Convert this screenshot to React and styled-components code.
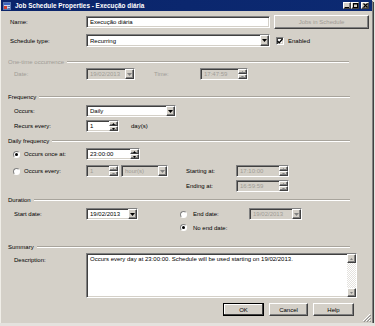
import React from "react";
import styled, { createGlobalStyle, css } from "styled-components";

const Global = createGlobalStyle`
  html, body { margin: 0; padding: 0; background: #e4e2de; }
  body { font-family: "Liberation Sans", Arial, sans-serif; font-size: 6px; color: #000; }
  * { box-sizing: border-box; }
`;

const Win = styled.div`
  width: 372px;
  height: 323px;
  background: #d4d0c8;
  box-shadow: 1px 1px 0 #808080, 2px 2px 0 #404040;
  border-left: 1px solid #f0eee8;
  display: flex;
  flex-direction: column;
  position: relative;
  overflow: hidden;
`;

const TitleBar = styled.div`
  height: 11px;
  background: linear-gradient(90deg, #0a246a 0%, #0c2a72 100%);
  display: flex;
  align-items: center;
  padding: 0 3px 0 2px;
`;

const TitleText = styled.span`
  color: #fff;
  font-weight: bold;
  font-size: 6.4px;
  margin-left: 4px;
  flex: 1;
  white-space: nowrap;
`;

const raised = css`
  background: #d4d0c8;
  border: 1px solid;
  border-color: #fff #404040 #404040 #fff;
  box-shadow: inset -1px -1px 0 #808080;
`;

const sunken = css`
  border: 1px solid;
  border-color: #808080 #fff #fff #808080;
  box-shadow: inset 1px 1px 0 #404040, inset -1px -1px 0 #d4d0c8;
`;

const CapButton = styled.div`
  ${raised};
  width: 8px;
  height: 7px;
  margin-left: ${(p) => p.$ml || 0}px;
  display: flex;
  align-items: center;
  justify-content: center;
  font-size: 6px;
  line-height: 1;
`;

const Row = styled.div`
  display: flex;
  align-items: ${(p) => p.$align || "center"};
  height: ${(p) => p.$h}px;
  margin-top: ${(p) => p.$mt}px;
  padding-left: ${(p) => p.$pl}px;
  flex-shrink: 0;
`;

const Label = styled.span`
  width: ${(p) => (p.$w ? `${p.$w}px` : "auto")};
  margin-left: ${(p) => p.$ml || 0}px;
  margin-top: ${(p) => p.$mt || 0}px;
  color: ${(p) => (p.$dis ? "#a09c96" : "#000")};
  white-space: nowrap;
  flex-shrink: 0;
`;

const Box = styled.div`
  ${sunken};
  width: ${(p) => p.$w}px;
  height: ${(p) => p.$h || 12}px;
  margin-left: ${(p) => p.$ml || 0}px;
  background: ${(p) => (p.$dis ? "#d4d0c8" : "#fff")};
  color: ${(p) => (p.$dis ? "#a09c96" : "#000")};
  display: flex;
  align-items: center;
  padding-left: 3px;
  flex-shrink: 0;
  white-space: nowrap;
`;

const BoxText = styled.span`
  flex: 1;
  overflow: hidden;
`;

const DropBtn = styled.div`
  ${raised};
  width: 9px;
  height: 100%;
  display: flex;
  align-items: center;
  justify-content: center;
  border-width: 1px;
`;

const SpinCol = styled.div`
  width: 9px;
  height: 100%;
  display: flex;
  flex-direction: column;
`;

const SpinPart = styled.div`
  ${raised};
  flex: 1;
  display: flex;
  align-items: center;
  justify-content: center;
`;

const Arrow = ({ up, dis, size = 3 }) => (
  <svg width={size * 2 - 1} height={size} viewBox={`0 0 ${size * 2 - 1} ${size}`}>
    <polygon
      points={up ? `0,${size} ${size - 0.5},0 ${size * 2 - 1},${size}` : `0,0 ${size * 2 - 1},0 ${size - 0.5},${size}`}
      fill={dis ? "#808080" : "#000"}
    />
  </svg>
);

const Combo = ({ w, h, ml, dis, children }) => (
  <Box $w={w} $h={h} $ml={ml} $dis={dis}>
    <BoxText>{children}</BoxText>
    <DropBtn>
      <Arrow dis={dis} />
    </DropBtn>
  </Box>
);

const Spin = ({ w, ml, dis, children }) => (
  <Box $w={w} $ml={ml} $dis={dis}>
    <BoxText>{children}</BoxText>
    <SpinCol>
      <SpinPart>
        <Arrow up dis={dis} size={2} />
      </SpinPart>
      <SpinPart>
        <Arrow dis={dis} size={2} />
      </SpinPart>
    </SpinCol>
  </Box>
);

const RadioCircle = styled.div`
  width: 7px;
  height: 7px;
  border-radius: 50%;
  border: 1px solid;
  border-color: #808080 #fff #fff #808080;
  background: #fff;
  margin-left: ${(p) => p.$ml || 0}px;
  display: flex;
  align-items: center;
  justify-content: center;
  flex-shrink: 0;
  &::after {
    content: "";
    width: 3px;
    height: 3px;
    border-radius: 50%;
    background: ${(p) => (p.$on ? "#000" : "transparent")};
  }
`;

const Check = styled.div`
  ${sunken};
  width: 8px;
  height: 8px;
  margin-left: ${(p) => p.$ml || 0}px;
  background: #fff;
  display: flex;
  align-items: center;
  justify-content: center;
  flex-shrink: 0;
`;

const Header = styled.div`
  display: flex;
  align-items: center;
  height: 9px;
  margin-top: ${(p) => p.$mt}px;
  padding-left: 7px;
  margin-right: ${(p) => p.$mr || 22}px;
  flex-shrink: 0;
`;

const HeaderText = styled.span`
  color: ${(p) => (p.$dis ? "#a09c96" : "#000")};
  white-space: nowrap;
  margin-right: 3px;
`;

const HeaderLine = styled.div`
  flex: 1;
  border-top: 1px solid #a8a49c;
  border-bottom: 1px solid #fff;
`;

const PushButton = styled.div`
  ${raised};
  width: ${(p) => p.$w}px;
  height: ${(p) => p.$h || 13}px;
  margin-left: ${(p) => p.$ml || 0}px;
  display: flex;
  align-items: center;
  justify-content: center;
  color: ${(p) => (p.$dis ? "#a09c96" : "#000")};
  flex-shrink: 0;
  ${(p) =>
    p.$default &&
    css`
      outline: 1px solid #000;
      outline-offset: -1px;
      box-shadow: inset -1px -1px 0 #404040, inset 1px 1px 0 #fff;
    `}
`;

const DescBox = styled.div`
  ${sunken};
  width: 271px;
  height: 45px;
  background: #fff;
  display: flex;
  flex-shrink: 0;
`;

const DescText = styled.div`
  flex: 1;
  padding: 2px 3px;
  white-space: nowrap;
  overflow: hidden;
  line-height: 1.2;
`;

const ScrollBar = styled.div`
  width: 9px;
  height: 100%;
  display: flex;
  flex-direction: column;
  background: repeating-conic-gradient(#fff 0 25%, #e4e2de 0 50%) 0 0 / 2px 2px;
`;

const ScrollBtn = styled.div`
  ${raised};
  height: 9px;
  display: flex;
  align-items: center;
  justify-content: center;
`;

const ScrollTrack = styled.div`
  flex: 1;
`;

const Grip = styled.svg`
  position: absolute;
  right: 1px;
  bottom: 1px;
`;

export default function App() {
  return (
    <>
      <Global />
      <Win>
        <TitleBar>
          <svg width="8" height="8" viewBox="0 0 8 8">
            <rect x="0" y="0" width="8" height="8" fill="#c8d8f0" />
            <rect x="0.5" y="0.5" width="7" height="7" fill="none" stroke="#5a78b0" />
            <rect x="1" y="1" width="6" height="2" fill="#3a64c0" />
            <rect x="1" y="4" width="3" height="3" fill="#d04030" />
            <rect x="4.5" y="4" width="2.5" height="1" fill="#5a78b0" />
            <rect x="4.5" y="6" width="2.5" height="1" fill="#5a78b0" />
          </svg>
          <TitleText>Job Schedule Properties - Execução diária</TitleText>
          <CapButton>
            <svg width="4" height="4" viewBox="0 0 4 4"><rect x="0" y="3" width="4" height="1" fill="#000" /></svg>
          </CapButton>
          <CapButton>
            <svg width="5" height="5" viewBox="0 0 5 5"><rect x="0.5" y="0.5" width="4" height="4" fill="none" stroke="#000" /><rect x="0" y="0" width="5" height="1.5" fill="#000" /></svg>
          </CapButton>
          <CapButton $ml={2}>
            <svg width="5" height="5" viewBox="0 0 5 5"><path d="M0.5 0.5 L4.5 4.5 M4.5 0.5 L0.5 4.5" stroke="#000" strokeWidth="1.2" /></svg>
          </CapButton>
        </TitleBar>

        <Row $mt={4} $h={14} $pl={9}>
          <Label $w={76}>Name:</Label>
          <Box $w={184}>
            <BoxText>Execução diária</BoxText>
          </Box>
          <PushButton $w={95} $h={14} $ml={4} $dis>Jobs in Schedule</PushButton>
        </Row>

        <Row $mt={5} $h={13} $pl={9}>
          <Label $w={76}>Schedule type:</Label>
          <Combo w={184} h={13}>Recurring</Combo>
          <Check $ml={6}>
            <svg width="6" height="6" viewBox="0 0 6 6"><path d="M0.5 3 L2.2 4.8 L5.5 1" fill="none" stroke="#000" strokeWidth="1.3" /></svg>
          </Check>
          <Label $ml={4}>Enabled</Label>
        </Row>

        <Header $mt={10} $mr={23}>
          <HeaderText $dis>One-time occurrence</HeaderText>
          <HeaderLine />
        </Header>
        <Row $mt={2} $h={12} $pl={13}>
          <Label $w={72} $dis>Date:</Label>
          <Combo w={49} dis>19/02/2013</Combo>
          <Label $w={46} $ml={19} $dis>Time:</Label>
          <Spin w={48} dis>17:47:59</Spin>
        </Row>

        <Header $mt={12}>
          <HeaderText>Frequency</HeaderText>
          <HeaderLine />
        </Header>
        <Row $mt={4} $h={12} $pl={13}>
          <Label $w={72}>Occurs:</Label>
          <Combo w={90}>Daily</Combo>
        </Row>
        <Row $mt={3} $h={12} $pl={13}>
          <Label $w={72}>Recurs every:</Label>
          <Spin w={33}>1</Spin>
          <Label $ml={12}>day(s)</Label>
        </Row>

        <Header $mt={4}>
          <HeaderText>Daily frequency</HeaderText>
          <HeaderLine />
        </Header>
        <Row $mt={3} $h={12} $pl={12}>
          <RadioCircle $on />
          <Label $w={62} $ml={4}>Occurs once at:</Label>
          <Spin w={54}>23:00:00</Spin>
        </Row>
        <Row $mt={5} $h={12} $pl={12}>
          <RadioCircle />
          <Label $w={62} $ml={4}>Occurs every:</Label>
          <Spin w={33} dis>1</Spin>
          <Combo w={47} ml={2} dis>hour(s)</Combo>
          <Label $w={50} $ml={18}>Starting at:</Label>
          <Spin w={53} dis>17:10:00</Spin>
        </Row>
        <Row $mt={3} $h={12} $pl={185}>
          <Label $w={50}>Ending at:</Label>
          <Spin w={53} dis>16:59:59</Spin>
        </Row>

        <Header $mt={3}>
          <HeaderText>Duration</HeaderText>
          <HeaderLine />
        </Header>
        <Row $mt={4} $h={12} $pl={13}>
          <Label $w={72}>Start date:</Label>
          <Combo w={52}>19/02/2013</Combo>
          <RadioCircle $ml={42} />
          <Label $w={56} $ml={6}>End date:</Label>
          <Combo w={53} dis>19/02/2013</Combo>
        </Row>
        <Row $mt={2} $h={11} $pl={179}>
          <RadioCircle $on />
          <Label $ml={6}>No end date:</Label>
        </Row>

        <Header $mt={9}>
          <HeaderText>Summary</HeaderText>
          <HeaderLine />
        </Header>
        <Row $mt={2} $h={45} $pl={13} $align="flex-start">
          <Label $w={72} $mt={4}>Description:</Label>
          <DescBox>
            <DescText>Occurs every day at 23:00:00. Schedule will be used starting on 19/02/2013.</DescText>
            <ScrollBar>
              <ScrollBtn><Arrow up dis size={2} /></ScrollBtn>
              <ScrollTrack />
              <ScrollBtn><Arrow dis size={2} /></ScrollBtn>
            </ScrollBar>
          </DescBox>
        </Row>

        <Row $mt={5} $h={13} $pl={222}>
          <PushButton $w={41} $default>OK</PushButton>
          <PushButton $w={39} $ml={5}>Cancel</PushButton>
          <PushButton $w={41} $ml={5}>Help</PushButton>
        </Row>

        <Grip width="9" height="9" viewBox="0 0 9 9">
          <path d="M8 1 L1 8 M8 4 L4 8 M8 7 L7 8" stroke="#fff" strokeWidth="1" />
          <path d="M9 1.8 L1.8 9 M9 4.8 L4.8 9 M9 7.8 L7.8 9" stroke="#808080" strokeWidth="1" />
        </Grip>
      </Win>
    </>
  );
}
